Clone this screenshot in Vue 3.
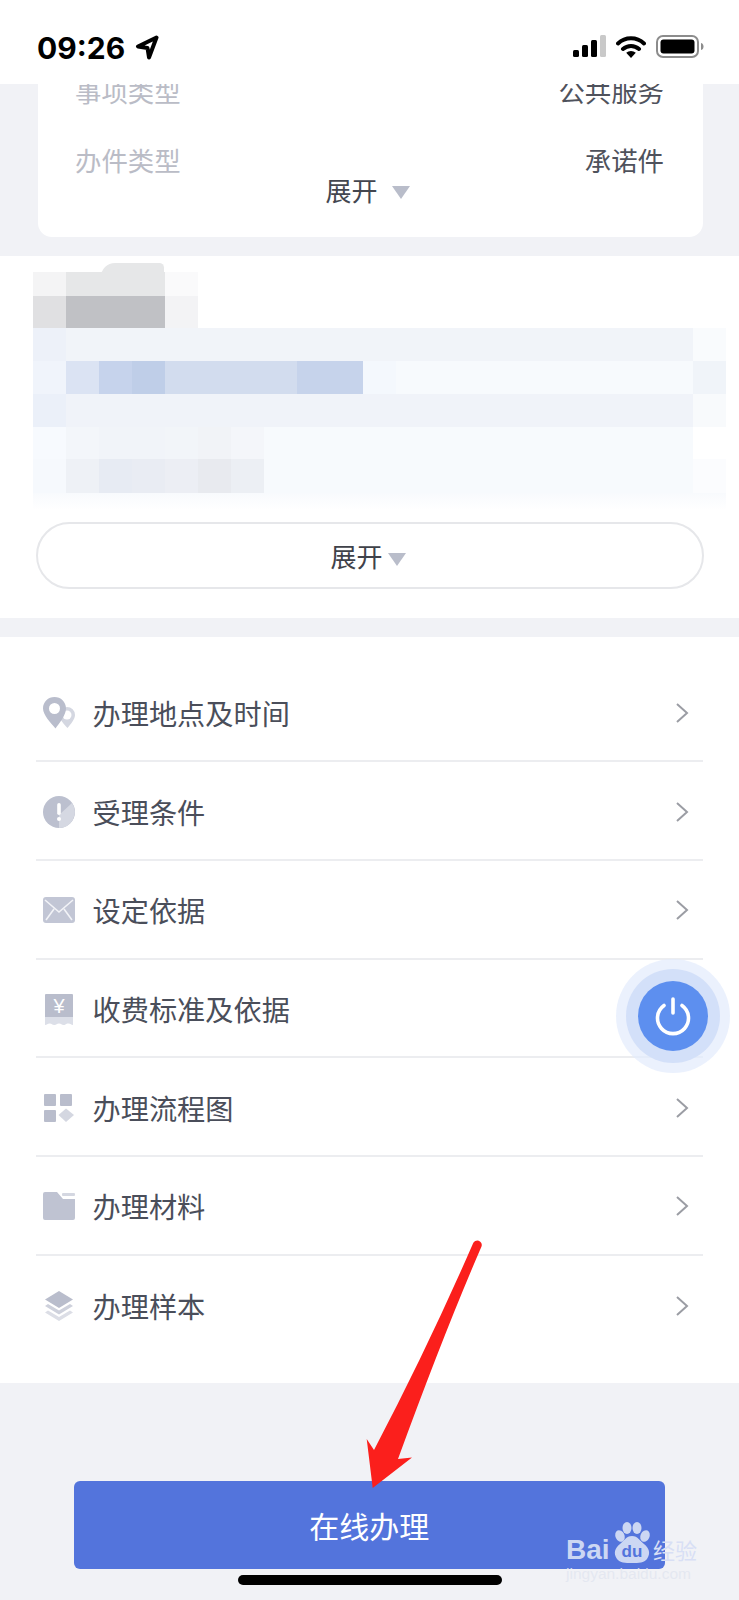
<script setup>
const items = [
  { name: '办理地点及时间', icon: 'pin' },
  { name: '受理条件', icon: 'alert' },
  { name: '设定依据', icon: 'mail' },
  { name: '收费标准及依据', icon: 'yen' },
  { name: '办理流程图', icon: 'grid' },
  { name: '办理材料', icon: 'folder' },
  { name: '办理样本', icon: 'layers' },
]

// mosaic over the hidden text: height of the row, then [columns, colour]
const mosaic = [
  { h: 24, cells: [[1, '#f4f4f5'], [3, '#e6e7e8'], [1, '#fafafb']] },
  { h: 32, cells: [[1, '#e0e0e2'], [3, '#c0c1c5'], [1, '#f3f3f5']] },
  { h: 33, cells: [[1, '#edf1f9'], [19, '#f1f4f9'], [1, '#f9fbfd']] },
  { h: 33, cells: [[1, '#f0f4fb'], [1, '#dbe3f3'], [1, '#c6d3ec'], [1, '#bfcee8'], [4, '#d2dcee'], [2, '#c6d3eb'], [1, '#f4f8fd'], [9, '#f7fafd'], [1, '#f0f4f9']] },
  { h: 33, cells: [[1, '#ebf0f9'], [19, '#f0f3f9'], [1, '#f8fafc']] },
  { h: 32, cells: [[1, '#f7fafe'], [1, '#f3f6fa'], [2, '#f1f4f9'], [1, '#f2f5f9'], [1, '#f1f3f7'], [1, '#f4f6fa'], [13, '#f7fafd']] },
  { h: 34, cells: [[1, '#f6f9fd'], [1, '#eef1f6'], [1, '#e7ebf3'], [1, '#e9ecf3'], [1, '#eceef4'], [1, '#e8eaef'], [1, '#eceff4'], [13, '#f7fafd'], [1, '#fbfcfe']] },
  { h: 17, cells: [[21, 'linear-gradient(#f8fafd, #fff)']] },
]
</script>

<template>
  <div class="phone">
    <header class="status">
      <div class="clock">
        <span>09:26</span>
        <svg class="nav-arrow" width="24" height="25" viewBox="0 0 24 25">
          <path d="M21.500 2.500 3 11.500l9.500 1.500 1.500 9.500z" fill="none" stroke="#000" stroke-width="4" stroke-linejoin="round" />
        </svg>
      </div>
      <div class="status-icons">
        <svg width="33" height="22" viewBox="0 0 33 22">
          <rect x="0" y="15" width="6" height="7" rx="1.5" fill="#000" />
          <rect x="9" y="10" width="6" height="12" rx="1.5" fill="#000" />
          <rect x="18" y="5" width="6" height="17" rx="1.5" fill="#000" />
          <rect x="27" y="0" width="6" height="22" rx="1.5" fill="#c9c9c9" />
        </svg>
        <svg width="30" height="23" viewBox="0 0 30 23">
          <path d="M2 8.500a19 19 0 0 1 26 0M7 14a12 12 0 0 1 16 0" fill="none" stroke="#000" stroke-width="4" stroke-linecap="round" />
          <path d="M15 23 10.200 17.800a7 7 0 0 1 9.600 0z" fill="#000" />
        </svg>
        <svg width="48" height="23" viewBox="0 0 48 23">
          <rect x="1" y="1" width="41" height="21" rx="6" fill="none" stroke="#8c8c8c" stroke-width="2" />
          <rect x="4.500" y="4.500" width="34" height="14" rx="3" fill="#000" />
          <path d="M45 8c2 .5 2.500 2 2.500 3.500S47 14.500 45 15z" fill="#8c8c8c" />
        </svg>
      </div>
    </header>

    <section class="info-wrap">
      <div class="info-card">
        <div class="info-rows">
          <div class="info-row"><span class="label">事项类型</span><span class="value">公共服务</span></div>
          <div class="info-row"><span class="label">办件类型</span><span class="value">承诺件</span></div>
        </div>
        <div class="toggle">
          <span>展开</span>
          <i class="tri"></i>
        </div>
      </div>
    </section>

    <section class="desc">
      <div class="mosaic">
        <div class="blob"></div>
        <div v-for="(row, i) in mosaic" :key="i" class="mosaic-row" :style="{ height: row.h + 'px' }">
          <div
            v-for="(cell, j) in row.cells"
            :key="j"
            :style="{ width: cell[0] * 33 + 'px', background: cell[1] }"
          ></div>
        </div>
      </div>
      <div class="more-btn">
        <span>展开</span>
        <i class="tri small"></i>
      </div>
    </section>

    <section class="list">
      <div v-for="item in items" :key="item.name" class="row">
        <span class="icon">
          <svg v-if="item.icon === 'pin'" width="32" height="32" viewBox="0 0 32 32">
            <path d="M24 10a8 8 0 0 1 8 8c0 4-4 9-7.500 13-3-3.500-8-8-8-13a8 8 0 0 1 7.500-8z" fill="#d4d7e1" />
            <circle cx="24" cy="18" r="4.500" fill="#fff" />
            <path d="M11.500 0C17.800 0 23 4.800 23 11.500 23 18 16.500 26 12.500 31.500 8 26 0 18 0 11.500 0 4.800 5.200 0 11.500 0z" fill="#b9bdcc" />
            <circle cx="11.500" cy="11.500" r="5.500" fill="#fff" />
          </svg>
          <svg v-else-if="item.icon === 'alert'" width="32" height="32" viewBox="0 0 32 32">
            <circle cx="16" cy="16" r="16" fill="#bcc0cf" />
            <path d="M16 32V19L29 7a16 16 0 0 1-13 25z" fill="#d5d8e2" />
            <rect x="14.200" y="7" width="3.600" height="12" rx="1.800" fill="#fff" />
            <circle cx="16" cy="23" r="2" fill="#fff" />
          </svg>
          <svg v-else-if="item.icon === 'mail'" width="32" height="26" viewBox="0 0 32 26">
            <rect width="32" height="26" rx="3" fill="#c2c6d5" />
            <path d="M2 3 16 15 30 3M3 23 11 12M29 23 21 12" fill="none" stroke="#f2f3f7" stroke-width="1.600" />
          </svg>
          <svg v-else-if="item.icon === 'yen'" width="28" height="31" viewBox="0 0 28 31">
            <path d="M0 1a1 1 0 0 1 1-1h26a1 1 0 0 1 1 1v22H0z" fill="#b9bdcc" />
            <path d="M0 23h28v8c-2 0-2-1.500-4.700-1.500S21 31 18.700 31s-2.300-1.500-4.700-1.500S11.700 31 9.300 31s-2.300-1.500-4.600-1.500S2 31 0 31z" fill="#dcdfe8" />
            <text x="14" y="19" text-anchor="middle" font-size="20" font-family="Liberation Sans, sans-serif" fill="#fff">¥</text>
          </svg>
          <svg v-else-if="item.icon === 'grid'" width="30" height="28" viewBox="0 0 30 28">
            <rect width="12" height="12" rx="1" fill="#b9bdcc" />
            <rect x="16" width="12" height="12" rx="1" fill="#b9bdcc" />
            <rect y="16" width="12" height="12" rx="1" fill="#b9bdcc" />
            <path d="M22 14.500 30 21l-8 7-7.500-7z" fill="#d4d7e1" />
          </svg>
          <svg v-else-if="item.icon === 'folder'" width="32" height="28" viewBox="0 0 32 28">
            <path d="M2 0h12l6 7h12v19a2 2 0 0 1-2 2H2a2 2 0 0 1-2-2V2a2 2 0 0 1 2-2z" fill="#bfc3d2" />
            <rect x="19" y="1" width="13" height="3" rx="1" fill="#d4d7e1" />
          </svg>
          <svg v-else width="28" height="30" viewBox="0 0 28 30">
            <path d="M14 0 28 8.500 14 17 0 8.500z" fill="#b9bdcc" />
            <path d="M3 13 0 15 14 23.500 28 15l-3-2-11 6.500z" fill="#ced1dc" />
            <path d="M3 19.500 0 21.500 14 30l14-8.500-3-2L14 26z" fill="#dcdee6" />
          </svg>
        </span>
        <span class="row-name">{{ item.name }}</span>
        <svg class="chevron" width="14" height="22" viewBox="0 0 14 22">
          <path d="M2 2 12 11 2 20" fill="none" stroke="#9b9da4" stroke-width="2" />
        </svg>
      </div>
    </section>

    <section class="bottom">
      <div class="submit">在线办理</div>
    </section>

    <div class="float-btn">
      <div class="ring-mid">
        <div class="ring-inner">
          <svg width="40" height="40" viewBox="0 0 40 40">
            <path d="M11 9.500a15.500 15.500 0 1 0 18 0" fill="none" stroke="#fff" stroke-width="3.600" stroke-linecap="round" />
            <path d="M20 3v14" stroke="#fff" stroke-width="3.600" stroke-linecap="round" />
          </svg>
        </div>
      </div>
    </div>

    <svg class="red-arrow" width="124" height="255" viewBox="0 0 124 255">
      <path d="M111 6.500a4.500 4.500 0 0 1 8.500 3Q82 96 36 222l14-1.500L10.700 251 4.700 202l7.300 11Q66 110 111 6.500z" fill="#fb1f1c" />
    </svg>

    <div class="watermark">
      <div class="mark-top">
        <span class="bai">Bai</span>
        <svg class="paw" width="42" height="42" viewBox="0 0 42 42">
          <g fill="#ccd7f3">
            <ellipse cx="9" cy="14" rx="4.500" ry="6" transform="rotate(-25 9 14)" />
            <ellipse cx="16" cy="6" rx="4.500" ry="6" />
            <ellipse cx="26" cy="6" rx="4.500" ry="6" />
            <ellipse cx="34" cy="14" rx="4.500" ry="6" transform="rotate(25 34 14)" />
            <path d="M21 14c6 0 8 5 12 8 5 4 7 9 3 15-3 4-8 4-15 4S9 41 6 37c-4-6-2-11 3-15 4-3 6-8 12-8z" />
          </g>
          <text x="21" y="35" text-anchor="middle" font-size="17" font-weight="700" font-family="Liberation Sans, sans-serif" fill="#5374dc">du</text>
        </svg>
        <span class="jy">经验</span>
      </div>
      <div class="mark-url">jingyan.baidu.com</div>
    </div>

    <div class="home-bar"></div>
  </div>
</template>

<style>
html,
body {
  margin: 0;
  background: #f1f2f6;
}
</style>

<style scoped>
.phone {
  position: relative;
  width: 739px;
  height: 1600px;
  overflow: hidden;
  background: #f1f2f6;
  font-family: "Noto Sans CJK SC", "Liberation Sans", sans-serif;
  color: #4a4e5a;
}

.status {
  position: relative;
  z-index: 2;
  height: 84px;
  background: #fff;
  display: flex;
  justify-content: space-between;
  align-items: flex-start;
  padding: 35px 35px 0 37px;
  box-sizing: border-box;
}

.clock {
  display: flex;
  align-items: center;
  gap: 10px;
  font-family: Inter, "Liberation Sans", sans-serif;
  font-weight: 700;
  font-size: 30px;
  line-height: 24px;
  color: #000;
}

.status-icons {
  display: flex;
  align-items: flex-start;
  gap: 10px;
}

.info-wrap {
  height: 172px;
  padding: 0 36px 0 38px;
  box-sizing: border-box;
}

.info-card {
  height: 153px;
  background: #fff;
  border-radius: 0 0 14px 14px;
  overflow: hidden;
}

.info-rows {
  margin-top: -28px;
  padding: 0 39px 0 37px;
}

.info-row {
  height: 69px;
  display: flex;
  justify-content: space-between;
  align-items: center;
  font-size: 26.400px;
}

.label {
  color: #babcc6;
}

.value {
  color: #4f525c;
}

.toggle {
  margin-top: -20px;
  height: 30px;
  padding-right: 6px;
  display: flex;
  justify-content: center;
  align-items: center;
  gap: 14px;
  font-size: 26px;
  color: #43464f;
}

.tri {
  display: block;
  width: 0;
  height: 0;
  margin-top: 6px;
  border-left: 9.500px solid transparent;
  border-right: 9.500px solid transparent;
  border-top: 13px solid #b9bdca;
}

.tri.small {
  margin-top: 8px;
}

.desc {
  height: 361.500px;
  padding-top: 16px;
  box-sizing: border-box;
  background: #fff;
}

.mosaic {
  position: relative;
  height: 238px;
  margin-left: 33px;
  margin-bottom: 12px;
}

.mosaic-row {
  display: flex;
}

.blob {
  position: absolute;
  left: 68px;
  top: -9px;
  width: 63px;
  height: 14px;
  background: #e6e7e8;
  border-radius: 24px 8px 0 0;
}

.more-btn {
  height: 67px;
  margin: 0 35px 0 36px;
  padding-right: 4px;
  box-sizing: border-box;
  border: 2px solid #e6e7ea;
  border-radius: 34px;
  display: flex;
  justify-content: center;
  align-items: center;
  gap: 5px;
  font-size: 26px;
  color: #3f424a;
}

.list {
  margin-top: 19.500px;
  background: #fff;
  padding: 26.700px 36px 28px 36px;
  height: 746px;
  box-sizing: border-box;
}

.row {
  height: 98.700px;
  box-sizing: border-box;
  display: flex;
  align-items: center;
  border-bottom: 2px solid #ecedf0;
  padding: 2px 14px 0 7px;
}

.row:last-child {
  border-bottom: none;
}

.icon {
  width: 32px;
  display: flex;
  justify-content: center;
  margin-right: 17.500px;
}

.row-name {
  flex: 1;
  font-size: 28.200px;
  line-height: 40px;
  color: #4a4e5a;
}

.bottom {
  padding: 98px 74px 0 73.500px;
}

.submit {
  height: 88px;
  background: #5374dc;
  border-radius: 6px;
  color: #fff;
  font-size: 30px;
  display: flex;
  align-items: center;
  justify-content: center;
}

.float-btn {
  position: absolute;
  left: 616px;
  top: 959px;
  width: 114px;
  height: 114px;
  border-radius: 50%;
  background: rgba(226, 235, 252, 0.7);
  display: flex;
  align-items: center;
  justify-content: center;
}

.ring-mid {
  width: 94px;
  height: 94px;
  border-radius: 50%;
  background: #d3e0f9;
  display: flex;
  align-items: center;
  justify-content: center;
}

.ring-inner {
  width: 70px;
  height: 70px;
  border-radius: 50%;
  background: #5d8fef;
  display: flex;
  align-items: center;
  justify-content: center;
}

.red-arrow {
  position: absolute;
  left: 362px;
  top: 1237px;
}

.watermark {
  position: absolute;
  left: 566px;
  top: 1522px;
  width: 140px;
}

.mark-top {
  display: flex;
  align-items: flex-end;
  height: 42px;
}

.bai {
  width: 45px;
  margin-bottom: -4px;
  font-family: "Liberation Sans", sans-serif;
  font-weight: 700;
  font-size: 28px;
  line-height: 36px;
  color: #ccd7f3;
}

.paw {
  flex-shrink: 0;
}

.jy {
  font-size: 22px;
  line-height: 30px;
  color: #d8dff5;
  white-space: nowrap;
}

.mark-url {
  margin-top: 1px;
  font-family: "Liberation Sans", sans-serif;
  font-size: 15.500px;
  line-height: 18px;
  white-space: nowrap;
  color: rgba(226, 230, 240, 0.85);
}

.home-bar {
  position: absolute;
  left: 238px;
  top: 1575px;
  width: 264px;
  height: 10px;
  border-radius: 5px;
  background: #000;
}
</style>
